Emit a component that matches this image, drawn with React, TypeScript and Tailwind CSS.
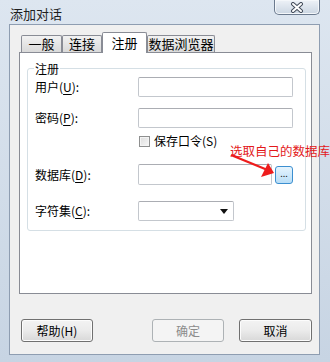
import React from 'react';

// Win7 style "添加对话" dialog, register tab
const font = { fontFamily: '"Noto Sans CJK SC", "Noto Sans", sans-serif' };

const Underlined: React.FC<{ label: string; k: string }> = ({ label, k }) => (
  <span>
    {label}(<span className="underline underline-offset-2">{k}</span>):
  </span>
);

const TextBox: React.FC<{ w: string }> = ({ w }) => (
  <div className={`${w} h-[20px] bg-white border border-[#c3c7cd] border-t-[#abadb3] rounded-[2px]`} />
);

const Btn: React.FC<{ label: React.ReactNode; disabled?: boolean; w: string }> = ({ label, disabled, w }) => (
  <div
    className={
      disabled
        ? `${w} h-[23px] flex items-center justify-center rounded-[3px] border border-[#adb2b5] bg-[#f4f4f4] text-[#8b8b8b]`
        : `${w} h-[23px] flex items-center justify-center rounded-[3px] border border-[#707070] bg-gradient-to-b from-[#f3f3f3] via-[#ebebeb] to-[#d8d8d8] shadow-[inset_0_0_0_1px_#fcfcfc] text-black`
    }
  >
    {label}
  </div>
);

const Tab: React.FC<{ label: string; w: string; active?: boolean }> = ({ label, w, active }) => (
  <div
    className={
      active
        ? `${w} h-[21px] -mb-[1px] relative z-10 flex items-center justify-center bg-white border border-b-0 border-[#898c95] rounded-t-[2px] text-[13px]`
        : `${w} h-[17px] flex items-center justify-center border border-b-0 border-[#898c95] bg-gradient-to-b from-[#f2f2f2] to-[#d9d9d9] rounded-t-[2px] text-[13px]`
    }
  >
    {label}
  </div>
);

export default function App() {
  return (
    <div className="w-[330px] h-[362px] bg-gradient-to-b from-[#dde6f0] to-[#c7d4e3] flex flex-col text-[12px] text-black overflow-hidden" style={font}>
      {/* title bar */}
      <div className="h-[24px] flex items-start justify-between pl-[10px] pr-[10px]">
        <div className="pt-[4px] text-[13px] text-[#1e1e1e]">添加对话</div>
        <div className="w-[46px] h-[15px] rounded-b-[5px] border border-t-0 border-[#6b7a8e] bg-gradient-to-b from-[#eef2f7] to-[#cbd6e2] shadow-[inset_0_0_0_1px_#f4f7fa] flex items-center justify-center">
          <svg width="14" height="11" viewBox="0 0 14 11">
            <path d="M3 2 L11 9 M11 2 L3 9" stroke="#434c5a" strokeWidth="4" strokeLinecap="round" />
            <path d="M3 2 L11 9 M11 2 L3 9" stroke="#ffffff" strokeWidth="2" strokeLinecap="round" />
          </svg>
        </div>
      </div>

      {/* client area */}
      <div className="ml-[9px] w-[311px] h-[331px] border border-[#8e9db1] bg-[#f0f0f0] pl-[9px] flex flex-col">
        {/* tabs */}
        <div className="mt-[7px] h-[20px] pl-[2px] flex items-end">
          <Tab label="一般" w="w-[41px]" />
          <Tab label="连接" w="w-[40px]" />
          <Tab label="注册" w="w-[45px]" active />
          <Tab label="数据浏览器" w="w-[68px]" />
        </div>

        {/* tab panel */}
        <div className="relative w-[293px] h-[242px] bg-white border border-[#898c95] pt-[15px] pl-[7px]">
          <div className="relative w-[279px] h-[163px] border border-[#d5dfe5] rounded-[3px] pl-[7px] pt-[8px]">
            <div className="absolute left-[6px] -top-[9px] px-[1px] bg-white">注册</div>

            <div className="flex items-center">
              <div className="w-[103px]"><Underlined label="用户" k="U" /></div>
              <TextBox w="w-[155px]" />
            </div>
            <div className="flex items-center mt-[11px]">
              <div className="w-[103px]"><Underlined label="密码" k="P" /></div>
              <TextBox w="w-[155px]" />
            </div>
            <div className="flex items-center mt-[6px] pl-[104px] h-[14px]">
              <div className="w-[11px] h-[11px] border border-[#8e8f8f] bg-gradient-to-br from-[#dcdcdc] to-[#f7f7f7] shadow-[inset_0_0_0_1px_#f4f4f4]" />
              <span className="ml-[4px]">保存口令(S)</span>
            </div>
            <div className="flex items-center mt-[16px]">
              <div className="w-[103px]"><Underlined label="数据库" k="D" /></div>
              <div className="w-[134px] h-[21px] bg-white border border-[#c3c7cd] border-t-[#abadb3] rounded-[2px]" />
              <div className="ml-[3px] w-[18px] h-[18px] rounded-[3px] border border-[#3c8fd0] bg-gradient-to-b from-[#e6f4fd] to-[#b9def7] flex items-center justify-center text-[9px] leading-none pb-[3px] text-[#222]">
                ...
              </div>
            </div>
            <div className="flex items-center mt-[16px]">
              <div className="w-[103px]"><Underlined label="字符集" k="C" /></div>
              <div className="w-[96px] h-[20px] bg-white border border-[#c3c7cd] border-t-[#abadb3] rounded-[2px] flex items-center justify-end pr-[5px]">
                <svg width="8" height="5" viewBox="0 0 8 5">
                  <path d="M0 0 H8 L4 5 Z" fill="#111" />
                </svg>
              </div>
            </div>
          </div>

          {/* annotation */}
          <div className="absolute left-[210px] top-[89px] text-[12.5px] text-[#e3191b] whitespace-nowrap">选取自己的数据库</div>
          <svg className="absolute left-[208px] top-[100px]" width="50" height="28" viewBox="0 0 50 28">
            <path d="M3 2 L42 18" stroke="#ee1c1c" strokeWidth="2.2" />
            <path d="M46 20 L40 10 L33 24 Z" fill="#ee1c1c" />
          </svg>
        </div>

        {/* buttons */}
        <div className="mt-[25px] pl-[2px] flex items-center">
          <Btn label="帮助(H)" w="w-[72px]" />
          <div className="ml-[59px]"><Btn label="确定" w="w-[72px]" disabled /></div>
          <div className="ml-[15px]"><Btn label="取消" w="w-[73px]" /></div>
        </div>
      </div>
    </div>
  );
}
